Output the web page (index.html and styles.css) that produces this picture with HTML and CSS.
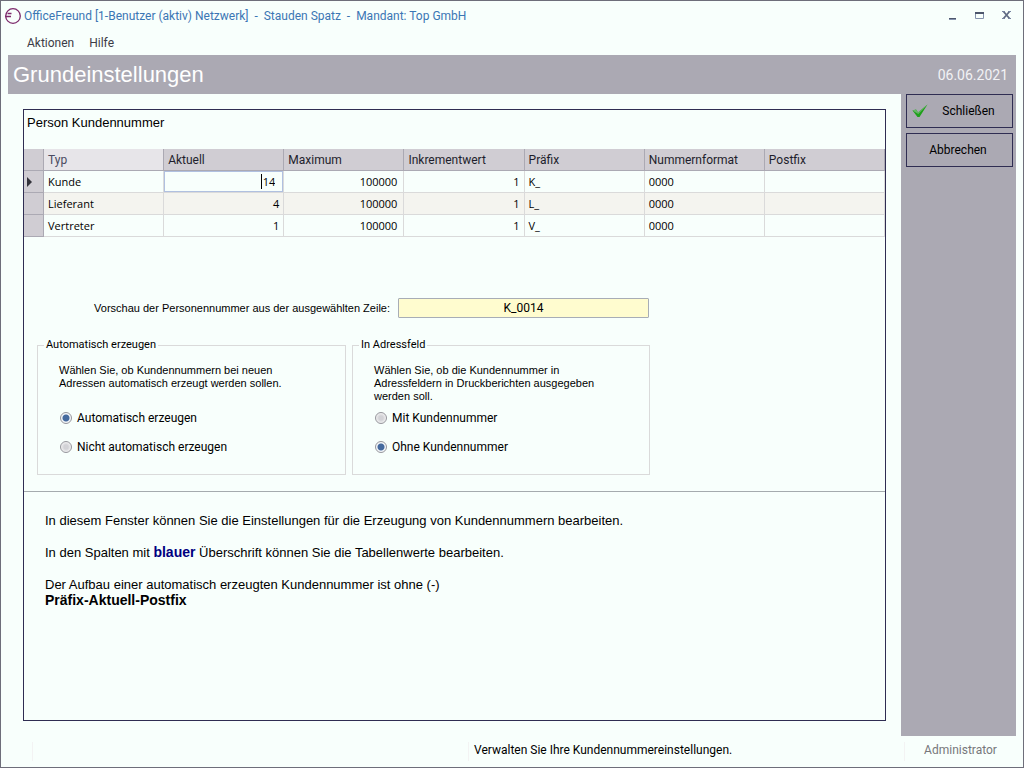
FILE: index.html
```html
<!DOCTYPE html>
<html lang="de">
<head>
<meta charset="utf-8">
<meta name="viewport" content="width=device-width, initial-scale=1">
<title>OfficeFreund - Grundeinstellungen</title>
<link rel="stylesheet" href="styles.css">
</head>
<body>
<div class="window">
  <header class="titlebar">
    <svg class="logo" viewBox="0 0 18 18" aria-hidden="true"><circle cx="9" cy="9" r="7.300" fill="none" stroke="#7d2a6c" stroke-width="1.300"/><path d="M1 9.500h6M3.500 6.500H7.500" fill="none" stroke="#7d2a6c" stroke-width="1.300"/></svg>
    <span class="title">OfficeFreund [1-Benutzer (aktiv) Netzwerk]&nbsp; -&nbsp; Stauden Spatz&nbsp; -&nbsp; Mandant: Top GmbH</span>
    <div class="window-controls">
      <button type="button" aria-label="Minimieren"><svg viewBox="0 0 12 12"><path d="M2 8.500h7" stroke="#4d566c"/><path d="M2 9.500h7" stroke="#8592ad"/></svg></button>
      <button type="button" aria-label="Maximieren"><svg viewBox="0 0 12 12"><path d="M1.500 4v4.500h8V4" fill="none" stroke="#8592ad"/><path d="M1 3h9" stroke="#4d566c" stroke-width="2"/></svg></button>
      <button type="button" aria-label="Schließen"><svg viewBox="0 0 12 12"><path d="M2.500 1.500l6 7M8.500 1.500l-6 7" stroke="#606b83" stroke-width="1.800"/><path d="M1 1.500h3M7 1.500h3M1 8.500h3M7 8.500h3" stroke="#7783a0"/></svg></button>
    </div>
  </header>
  <nav class="menubar">
    <button type="button">Aktionen</button>
    <button type="button">Hilfe</button>
  </nav>
  <div class="banner">
    <h1>Grundeinstellungen</h1>
    <time datetime="2021-06-06">06.06.2021</time>
  </div>
  <div class="workspace">
    <main class="panel">
      <h2>Person Kundennummer</h2>
      <table class="grid">
        <colgroup><col class="marker-col"><col><col><col><col><col><col><col></colgroup>
        <thead>
          <tr><th></th><th class="fixed">Typ</th><th>Aktuell</th><th>Maximum</th><th>Inkrementwert</th><th>Präfix</th><th>Nummernformat</th><th>Postfix</th></tr>
        </thead>
        <tbody>
          <tr><td class="marker"><svg viewBox="0 0 6 10"><path d="M0 0l5 5-5 5z" fill="#33333b"/></svg></td><td>Kunde</td><td class="editing"><span class="editor"><i class="caret"></i><input type="text" value="14" aria-label="Aktuell Kunde"></span></td><td class="num">100000</td><td class="num last">1</td><td>K_</td><td>0000</td><td></td></tr>
          <tr><td class="marker"></td><td>Lieferant</td><td class="num last">4</td><td class="num">100000</td><td class="num last">1</td><td>L_</td><td>0000</td><td></td></tr>
          <tr><td class="marker"></td><td>Vertreter</td><td class="num last">1</td><td class="num">100000</td><td class="num last">1</td><td>V_</td><td>0000</td><td></td></tr>
        </tbody>
      </table>
      <div class="preview">
        <label for="preview">Vorschau der Personennummer aus der ausgewählten Zeile:</label>
        <input id="preview" type="text" value="K_0014" readonly>
      </div>
      <div class="groups">
        <fieldset>
          <legend>Automatisch erzeugen</legend>
          <p>Wählen Sie, ob Kundennummern bei neuen<br>Adressen automatisch erzeugt werden sollen.</p>
          <div class="options">
            <label><input type="radio" name="auto" checked>Automatisch erzeugen</label>
            <label><input type="radio" name="auto">Nicht automatisch erzeugen</label>
          </div>
        </fieldset>
        <fieldset>
          <legend>In Adressfeld</legend>
          <p>Wählen Sie, ob die Kundennummer in<br>Adressfeldern in Druckberichten ausgegeben<br>werden soll.</p>
          <div class="options">
            <label><input type="radio" name="address">Mit Kundennummer</label>
            <label><input type="radio" name="address" checked>Ohne Kundennummer</label>
          </div>
        </fieldset>
      </div>
      <section class="help">
        <p>In diesem Fenster können Sie die Einstellungen für die Erzeugung von Kundennummern bearbeiten.</p>
        <p>In den Spalten mit <b class="blue">blauer</b> Überschrift können Sie die Tabellenwerte bearbeiten.</p>
        <p>Der Aufbau einer automatisch erzeugten Kundennummer ist ohne (-)<br><b>Präfix-Aktuell-Postfix</b></p>
      </section>
    </main>
    <aside class="sidebar">
      <button type="button" class="with-icon"><svg viewBox="0 0 16 14" aria-hidden="true"><path d="M.5 6.500L4 5.500l2 3L15.500.5 7.500 13h-2z" fill="#1fa01a"/><path d="M.5 6.500L4 5.500l2 3L15.500.5 6.300 10z" fill="#66b866"/></svg><span>Schließen</span></button>
      <button type="button"><span>Abbrechen</span></button>
    </aside>
  </div>
  <footer class="statusbar">
    <span></span>
    <span class="hint">Verwalten Sie Ihre Kundennummereinstellungen.</span>
    <span class="user">Administrator</span>
  </footer>
</div>
</body>
</html>
```
FILE: styles.css
```css
* { box-sizing: border-box; }

body {
  margin: 0;
  background: #f8fffc;
  color: #000;
  font: 12px/16px Roboto, "Open Sans", sans-serif;
}

button {
  padding: 0;
  border: 0;
  background: none;
  color: inherit;
  font: inherit;
}

.window {
  display: flex;
  flex-direction: column;
  min-height: 100vh;
  padding: 0 7px;
  border: 1px solid #6e6e7a;
}

.titlebar {
  display: flex;
  align-items: center;
  height: 30px;
  margin-left: -4px;
  color: #3b76b4;
}

.logo { width: 18px; height: 18px; margin-right: 2px; }

.title { flex: 1; white-space: nowrap; }

.window-controls { display: flex; gap: 15px; margin-right: 3px; }
.window-controls button { width: 12px; height: 12px; }
.window-controls svg { display: block; }

.menubar {
  display: flex;
  gap: 15px;
  height: 24px;
  padding: 4px 0 0 19px;
  color: #3c3c46;
}

.menubar button { height: 16px; }

.banner {
  display: flex;
  align-items: center;
  justify-content: space-between;
  height: 39px;
  padding: 0 8px 0 5px;
  background: #aba9b3;
  color: #fff;
}

.banner h1 { margin: 0; font: 22px/24px "Liberation Sans", Arial, sans-serif; }
.banner time { font: 14px/16px Roboto, sans-serif; color: #f2f2f5; }

.workspace { display: flex; flex: 1; }

.panel {
  flex: 1;
  margin: 15px;
  border: 1px solid #2f2d52;
}

.panel h2 {
  margin: 5px 3px 18px;
  font: 13px/16px "Liberation Sans", Arial, sans-serif;
}

.grid {
  width: 100%;
  table-layout: fixed;
  border-collapse: separate;
  border-spacing: 0;
  font: 11px/16px "Open Sans", sans-serif;
}

.marker-col { width: 20px; }

.grid th {
  height: 22px;
  padding: 0 4px;
  border-right: 1px solid #aba9b3;
  border-bottom: 1px solid #aba9b3;
  background: #d0cdd3;
  font: 12px/16px Roboto, sans-serif;
  text-align: left;
  color: #1e1e2c;
}

.grid .fixed { background: #e7e5e9; color: #4a4a60; }

.grid td {
  height: 22px;
  padding: 0 4px;
  border-right: 1px solid #dadada;
  border-bottom: 1px solid #dadada;
}

.grid tbody tr:nth-child(2) { background: #f4f4ef; }

.grid .marker {
  padding: 0 3px;
  border-color: #aba9b3;
  background: #d0cdd3;
}

.marker svg { display: block; width: 6px; height: 10px; }

.grid .num { padding-right: 6px; text-align: right; }
.grid .last { padding-right: 4px; }
.grid .editing { padding: 0; }

.editor {
  display: flex;
  align-items: center;
  justify-content: flex-end;
  height: 21px;
  padding-right: 7px;
  border: 1px solid #b0c0e0;
}

.caret { width: 1px; height: 15px; background: #000; }

.editor input {
  width: 13px;
  padding: 0;
  border: 0;
  background: none;
  font: inherit;
  text-align: right;
}

.preview {
  display: flex;
  align-items: center;
  justify-content: flex-end;
  gap: 8px;
  width: 625px;
  margin-top: 61px;
  font: 11px/13px "Liberation Sans", Arial, sans-serif;
}

.preview input {
  width: 251px;
  height: 20px;
  padding: 0;
  border: 1px solid #a8adb6;
  border-radius: 1px;
  background: #fffccf;
  font: 12px/16px Roboto, sans-serif;
  text-align: center;
}

.groups {
  display: grid;
  grid-template-columns: 309px 298px;
  gap: 6px;
  margin: 20px 13px 16px;
}

fieldset {
  height: 137px;
  margin: 0;
  padding: 0 21px;
  border: 1px solid #dadada;
}

legend {
  margin-left: -15px;
  padding: 0 2px;
  font: 11px/14px Roboto, sans-serif;
}

fieldset p {
  height: 39px;
  margin: 12px 0 7px;
  font: 11px/13px "Liberation Sans", Arial, sans-serif;
  white-space: nowrap;
}

.options { display: grid; gap: 13px; }
.options label { display: flex; align-items: center; gap: 4px; }

.options input {
  appearance: none;
  width: 12px;
  height: 12px;
  margin: 0 1px;
  border: 1px solid #96969c;
  border-radius: 50%;
  background: radial-gradient(circle, #d2d2d6 30%, #f4f4f4 75%);
}

.options input:checked { background: radial-gradient(circle, #456a9e 3px, #f4f7fa 4px); }

.help {
  padding: 21px;
  border-top: 1px solid #a5abae;
  font: 13px/16px "Liberation Sans", Arial, sans-serif;
}

.help p { margin: 0 0 16px; }
.help b { font-size: 14px; line-height: 14px; }
.help .blue { color: #000080; }

.sidebar {
  display: flex;
  flex-direction: column;
  gap: 5px;
  width: 115px;
  padding: 0 3px 0 5px;
  background: #aba9b3;
}

.sidebar button {
  display: flex;
  align-items: center;
  justify-content: center;
  height: 34px;
  padding-right: 3px;
  border: 1px solid #2f2d52;
}

.sidebar .with-icon { padding-left: 5px; }
.with-icon svg { width: 16px; height: 14px; }
.with-icon span { flex: 1; text-align: center; }

.statusbar {
  display: grid;
  grid-template-columns: 436px 1fr 112px;
  align-items: center;
  height: 31px;
  padding-left: 24px;
}

.statusbar span { height: 19px; border-left: 1px solid #f3f3f3; line-height: 16px; }
.statusbar .hint { padding-left: 5px; }
.statusbar .user { text-align: center; color: #77777b; }
```
